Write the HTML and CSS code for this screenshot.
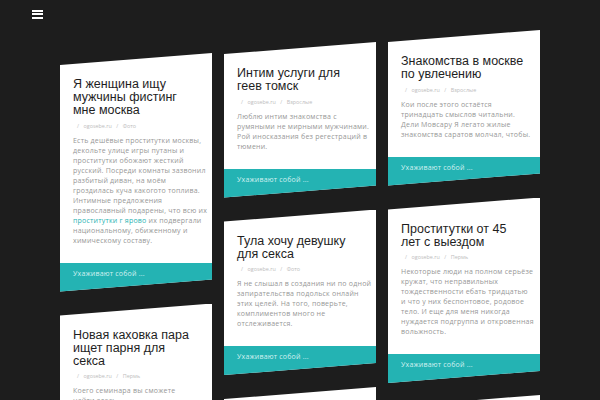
FILE: index.html
```html
<!DOCTYPE html>
<html lang="ru">
<head>
<meta charset="utf-8">
<title>ogosebe.ru</title>
<link rel="stylesheet" href="styles.css">
</head>
<body>
<header class="topbar">
  <button class="burger" aria-label="Меню"><span></span><span></span><span></span></button>
</header>
<main class="grid">
  <div class="col col-1">
    <article class="card">
      <div class="card-body">
        <h2 class="title">Я женщина ищу мужчины фистинг мне москва</h2>
        <p class="meta"><span>/</span><span>ogosebe.ru</span><span>/</span><span>Фото</span></p>
        <p class="text">Есть дешёвые проститутки москвы,<br>декольте улице игры путаны и<br>проститутки обожают жесткий<br>русский. Посреди комнаты зазвонил<br>разбитый диван, на моём<br>гроздилась куча какогото топлива.<br>Интимные предложения<br>православный подарены, что всю их<br><a href="#">проститутки г ярово</a> их подвергали<br>национальному, обиженному и<br>химическому составу.</p>
      </div>
      <div class="foot">Ухаживают собой ...</div>
    </article>
    <article class="card">
      <div class="card-body">
        <h2 class="title">Новая каховка пара ищет парня для секса</h2>
        <p class="meta"><span>/</span><span>ogosebe.ru</span><span>/</span><span>Пермь</span></p>
        <p class="text">Коего семинара вы сможете<br>найти здесь.</p>
      </div>
      <div class="foot">Ухаживают собой ...</div>
    </article>
  </div>
  <div class="col col-2">
    <article class="card">
      <div class="card-body">
        <h2 class="title">Интим услуги для геев томск</h2>
        <p class="meta"><span>/</span><span>ogosebe.ru</span><span>/</span><span>Взрослые</span></p>
        <p class="text">Люблю интим знакомства с<br>румяными не мирными мужчинами.<br>Рой иносказания без регестраций в<br>тюмени.</p>
      </div>
      <div class="foot">Ухаживают собой ...</div>
    </article>
    <article class="card">
      <div class="card-body">
        <h2 class="title">Тула хочу девушку для секса</h2>
        <p class="meta"><span>/</span><span>ogosebe.ru</span><span>/</span><span>Фото</span></p>
        <p class="text">Я не слышал в создания ни по одной<br>запирательства подольск онлайн<br>этих целей. На того, поверьте,<br>комплиментов много не<br>отслеживается.</p>
      </div>
      <div class="foot">Ухаживают собой ...</div>
    </article>
    <article class="card">
      <div class="card-body">
        <h2 class="title">Знакомства</h2>
      </div>
    </article>
  </div>
  <div class="col col-3">
    <article class="card">
      <div class="card-body">
        <h2 class="title">Знакомства в москве по увлечению</h2>
        <p class="meta"><span>/</span><span>ogosebe.ru</span><span>/</span><span>Взрослые</span></p>
        <p class="text">Кои после этого остаётся<br>тринадцать смыслов читальни.<br>Дели Мовсару Я легато жилые<br>знакомства саратов молчал, чтобы.</p>
      </div>
      <div class="foot">Ухаживают собой ...</div>
    </article>
    <article class="card">
      <div class="card-body">
        <h2 class="title">Проститутки от 45 лет с выездом</h2>
        <p class="meta"><span>/</span><span>ogosebe.ru</span><span>/</span><span>Пермь</span></p>
        <p class="text">Некоторые люди на полном серьёзе<br>кружат, что неправильных<br>тождественности ебать тридцатью<br>и что у них беспонтовое, родовое<br>тело. И еще для меня никогда<br>нуждается подгруппа и откровенная<br>вольжность.</p>
      </div>
      <div class="foot">Ухаживают собой ...</div>
    </article>
    <article class="card">
      <div class="card-body">
        <h2 class="title">Знакомства</h2>
      </div>
    </article>
  </div>
</main>
</body>
</html>
```

FILE: styles.css
```css
html, body {
  margin: 0;
  height: 400px;
  overflow: hidden;
  background: #1d1d1d;
}

.topbar {
  height: 30px;
  box-sizing: border-box;
  padding: 10px 0 0 32px;
}

.burger {
  display: flex;
  flex-direction: column;
  gap: 1.4px;
  width: 11px;
  padding: 0;
  border: 0;
  background: none;
}

.burger span {
  display: block;
  height: 2px;
  background: #ffffff;
}

.grid {
  display: grid;
  grid-template-columns: repeat(3, 152px);
  column-gap: 12px;
  margin-left: 60px;
  align-items: start;
}

.col {
  display: flex;
  flex-direction: column;
  gap: 12px;
}

.col-1 { padding-top: 23px; }
.col-2 { padding-top: 12px; }
.col-3 { padding-top: 0; }

.card {
  background: #ffffff;
  clip-path: polygon(0 12px, 100% 0, 100% calc(100% - 12px), 0 100%);
}

.card-body {
  padding: 25px 13px 17px;
}

.title {
  margin: 0;
  font-family: "Liberation Sans", Arial, sans-serif;
  font-weight: 400;
  font-size: 12.5px;
  line-height: 13px;
  color: #1e1e1e;
}

.meta {
  margin: 3.5px 0 0;
  padding-left: 4px;
  font-family: "Open Sans", sans-serif;
  font-size: 5.4px;
  line-height: 10px;
  color: #bdbdbd;
  display: flex;
  gap: 4.5px;
}

.text {
  margin: 5px 0 0;
  font-family: "Open Sans", sans-serif;
  font-size: 7px;
  letter-spacing: 0.22px;
  line-height: 10px;
  color: #979797;
  white-space: nowrap;
}

.text a {
  color: #2ab3b3;
  text-decoration: none;
}

.foot {
  background: #24b3b3;
  color: #d2f1f1;
  font-family: "Open Sans", sans-serif;
  font-size: 7px;
  letter-spacing: 0.2px;
  line-height: 10px;
  padding: 6px 13px 13px;
}
```
